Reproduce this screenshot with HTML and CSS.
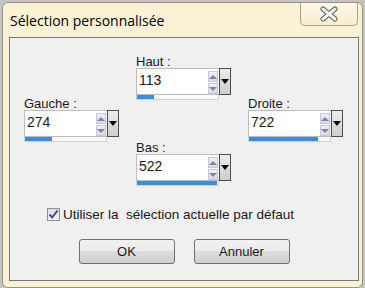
FILE: index.html
```html
<!DOCTYPE html>
<html lang="fr">
<head>
  <meta charset="UTF-8" />
  <title>Sélection personnalisée</title>
  <link rel="stylesheet" href="styles.css">
</head>
<body>
  <div class="window">
    <div class="titlebar">
      <span class="title">Sélection personnalisée</span>
      <button class="close" aria-label="Fermer">
        <svg width="20" height="16" viewBox="0 0 20 16">
          <path d="M4 3 L16 13 M16 3 L4 13" stroke="#5a5a5a" stroke-width="5" stroke-linecap="round"/>
          <path d="M4 3 L16 13 M16 3 L4 13" stroke="#f4f4f4" stroke-width="3" stroke-linecap="round"/>
        </svg>
      </button>
    </div>

    <div class="client">
      <div class="fields">
        <div class="field haut">
          <div class="label">Haut :</div>
          <div class="spin">
            <div class="input">
              <span class="value">113</span>
              <span class="arrows"><span class="up"></span><span class="down"></span></span>
            </div>
            <span class="drop"></span>
          </div>
          <div class="bar"><span class="fill" style="width: 17px"></span></div>
        </div>

        <div class="field gauche">
          <div class="label">Gauche :</div>
          <div class="spin">
            <div class="input">
              <span class="value">274</span>
              <span class="arrows"><span class="up"></span><span class="down"></span></span>
            </div>
            <span class="drop"></span>
          </div>
          <div class="bar"><span class="fill" style="width: 27px"></span></div>
        </div>

        <div class="field droite">
          <div class="label">Droite :</div>
          <div class="spin">
            <div class="input">
              <span class="value">722</span>
              <span class="arrows"><span class="up"></span><span class="down"></span></span>
            </div>
            <span class="drop"></span>
          </div>
          <div class="bar"><span class="fill" style="width: 69px"></span></div>
        </div>

        <div class="field bas">
          <div class="label">Bas :</div>
          <div class="spin">
            <div class="input">
              <span class="value">522</span>
              <span class="arrows"><span class="up"></span><span class="down"></span></span>
            </div>
            <span class="drop"></span>
          </div>
          <div class="bar"><span class="fill" style="width: 80px"></span></div>
        </div>
      </div>

      <label class="check">
        <span class="box">
          <svg width="11" height="11" viewBox="0 0 11 11">
            <path d="M1.5 5.5 L4.2 8.5 L9.5 1.5" fill="none" stroke="#2d4f8f" stroke-width="2"/>
          </svg>
        </span>
        Utiliser la&nbsp; sélection actuelle par défaut
      </label>

      <div class="buttons">
        <button class="btn">OK</button>
        <button class="btn">Annuler</button>
      </div>
    </div>
  </div>
</body>
</html>
```

FILE: styles.css
```css
:root {
  --frame: #fbf2d6;
  --frame-edge: #9c927e;
  --face: #f0f0f0;
  --blue: #3b8de2;
}

* {
  margin: 0;
  padding: 0;
  box-sizing: border-box;
}

body {
  background: #c4c4c4;
  font-family: 'Liberation Sans', Arial, sans-serif;
  font-size: 13px;
  color: #1a1a1a;
  overflow: hidden;
}

.window {
  margin: 2px 0 0 2px;
  width: 361px;
  height: 286px;
  background: var(--frame);
  border: 1px solid var(--frame-edge);
  border-radius: 6px;
}

/* title bar */
.titlebar {
  height: 34px;
  display: flex;
  justify-content: space-between;
  align-items: flex-start;
}

.title {
  font-family: 'Open Sans', sans-serif;
  font-size: 14px;
  line-height: 20px;
  padding: 8px 0 0 7px;
  color: #000;
}

.close {
  width: 58px;
  height: 23px;
  margin-right: 4px;
  border: 1px solid #a99e88;
  border-top: none;
  border-radius: 0 0 5px 5px;
  background: linear-gradient(#fdf8e8, #f7edcf);
  display: flex;
  align-items: center;
  justify-content: center;
}

/* client area */
.client {
  margin-left: 6px;
  width: 350px;
  height: 244px;
  background: var(--face);
  border: 1px solid #767676;
  padding: 17px 0 0 14px;
}

.fields {
  display: grid;
  grid-template-columns: 95px 95px 95px;
  grid-template-rows: 42px 44px 46px;
  column-gap: 17px;
  grid-template-areas:
    ". haut ."
    "gauche . droite"
    ". bas .";
}

.haut { grid-area: haut; }
.gauche { grid-area: gauche; }
.droite { grid-area: droite; }
.bas { grid-area: bas; }

.label {
  line-height: 13px;
  height: 13px;
}

.spin {
  display: flex;
  height: 27px;
}

.input {
  width: 83px;
  background: #fff;
  border: 1px solid #bdbdbd;
  border-right: none;
  display: flex;
  justify-content: space-between;
}

.value {
  font-size: 14px;
  line-height: 16px;
  padding: 3px 0 0 2px;
}

.arrows {
  display: flex;
  flex-direction: column;
  gap: 1px;
  padding: 2px 1px 0 0;
}

.arrows span {
  width: 10px;
  height: 11px;
  background: linear-gradient(#eef0f6, #d9dce8);
  border: 1px solid #c4c7d4;
  display: flex;
  align-items: center;
  justify-content: center;
}

.arrows .up::after,
.arrows .down::after {
  content: '';
  border-left: 4px solid transparent;
  border-right: 4px solid transparent;
}

.arrows .up::after { border-bottom: 4px solid #7f82ad; }
.arrows .down::after { border-top: 4px solid #7f82ad; }

.drop {
  width: 12px;
  border: 1px solid #4d4d4d;
  background: linear-gradient(#ececec, #cdcdcd);
  display: flex;
  align-items: center;
  justify-content: center;
}

.drop::after {
  content: '';
  border-left: 4px solid transparent;
  border-right: 4px solid transparent;
  border-top: 5px solid #000;
}

.bar {
  width: 83px;
  height: 5px;
  background: #fafafa;
  border: 1px solid #d2d2d2;
  border-top: none;
}

.fill {
  display: block;
  height: 4px;
  background: var(--blue);
}

/* checkbox */
.check {
  display: flex;
  align-items: center;
  gap: 3px;
  margin: 20px 0 0 23px;
  font-size: 13.5px;
  line-height: 15px;
}

.box {
  width: 13px;
  height: 13px;
  border: 1px solid #8e8f8f;
  background: linear-gradient(#dcdcdc, #fbfbfb);
  display: flex;
  align-items: center;
  justify-content: center;
}

/* buttons */
.buttons {
  display: flex;
  justify-content: center;
  gap: 19px;
  margin: 17px 0 0 -14px;
}

.btn {
  width: 96px;
  height: 25px;
  font-family: 'Liberation Sans', Arial, sans-serif;
  font-size: 13px;
  color: #1a1a1a;
  border: 1px solid #707070;
  border-radius: 3px;
  background: linear-gradient(#f2f2f2 0%, #ebebeb 49%, #dddddd 50%, #cfcfcf 100%);
}
```
